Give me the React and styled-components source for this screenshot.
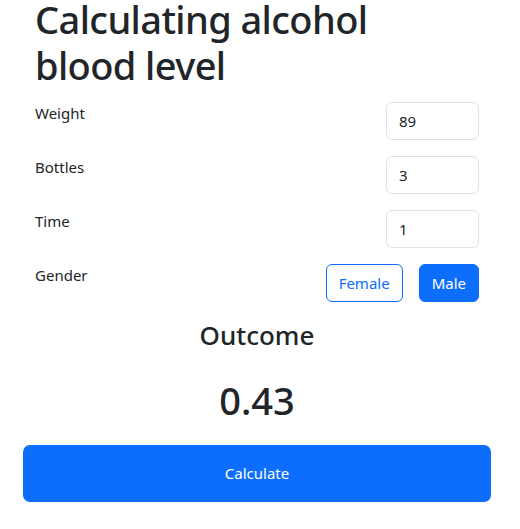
import React, { useState } from "react";
import styled, { createGlobalStyle } from "styled-components";

const GlobalStyle = createGlobalStyle`
  * { box-sizing: border-box; }
  body {
    margin: 0;
    background: #fff;
    color: #212529;
    font-family: "Noto Sans", "Open Sans", sans-serif;
    font-size: 16px;
    line-height: 1.5;
  }
`;

const Page = styled.div`
  width: 468px;
  margin-left: 23px;
`;

const Form = styled.form`
  display: flex;
  flex-direction: column;
  padding: 0 12px;
`;

const Title = styled.h1`
  max-width: 380px;
  margin: -4px 0 14px;
  font-size: 38px;
  font-weight: 500;
  line-height: 46px;
  letter-spacing: -0.6px;
`;

const Row = styled.div`
  display: flex;
  justify-content: space-between;
  align-items: flex-start;
  margin-bottom: 16px;
`;

const Label = styled.label`
  font-size: 15px;
`;

const Input = styled.input`
  width: 93px;
  height: 38px;
  padding: 6px 12px;
  border: 1px solid #dee2e6;
  border-radius: 6px;
  font: inherit;
  font-size: 15px;
  color: #212529;
  outline: none;
`;

const Toggle = styled.div`
  display: flex;
  gap: 16px;
`;

const GenderButton = styled.button`
  height: 38px;
  padding: 6px 12px;
  border: 1px solid #0d6efd;
  border-radius: 6px;
  background: ${(p) => (p.$active ? "#0d6efd" : "#fff")};
  color: ${(p) => (p.$active ? "#fff" : "#0d6efd")};
  font: inherit;
  font-size: 15px;
  cursor: pointer;
`;

const Outcome = styled.h3`
  margin: 2px 0 0;
  text-align: center;
  font-size: 26px;
  font-weight: 500;
  line-height: 1.2;
`;

const Result = styled.h2`
  margin: 27px 0 21px;
  text-align: center;
  font-size: 38px;
  font-weight: 500;
  line-height: 1.2;
`;

const Calculate = styled.button`
  width: 100%;
  height: 57px;
  border: none;
  border-radius: 7px;
  background: #0d6efd;
  color: #fff;
  font: inherit;
  font-size: 15px;
  cursor: pointer;
`;

export default function App() {
  const [weight, setWeight] = useState("89");
  const [bottles, setBottles] = useState("3");
  const [time, setTime] = useState("1");
  const [gender, setGender] = useState("male");

  return (
    <>
      <GlobalStyle />
      <Page>
        <Form onSubmit={(e) => e.preventDefault()}>
          <Title>Calculating alcohol blood level</Title>
          <Row>
            <Label>Weight</Label>
            <Input value={weight} onChange={(e) => setWeight(e.target.value)} />
          </Row>
          <Row>
            <Label>Bottles</Label>
            <Input value={bottles} onChange={(e) => setBottles(e.target.value)} />
          </Row>
          <Row>
            <Label>Time</Label>
            <Input value={time} onChange={(e) => setTime(e.target.value)} />
          </Row>
          <Row>
            <Label>Gender</Label>
            <Toggle>
              <GenderButton
                type="button"
                $active={gender === "female"}
                onClick={() => setGender("female")}
              >
                Female
              </GenderButton>
              <GenderButton
                type="button"
                $active={gender === "male"}
                onClick={() => setGender("male")}
              >
                Male
              </GenderButton>
            </Toggle>
          </Row>
          <Outcome>Outcome</Outcome>
          <Result>0.43</Result>
        </Form>
        <Calculate type="button">Calculate</Calculate>
      </Page>
    </>
  );
}
